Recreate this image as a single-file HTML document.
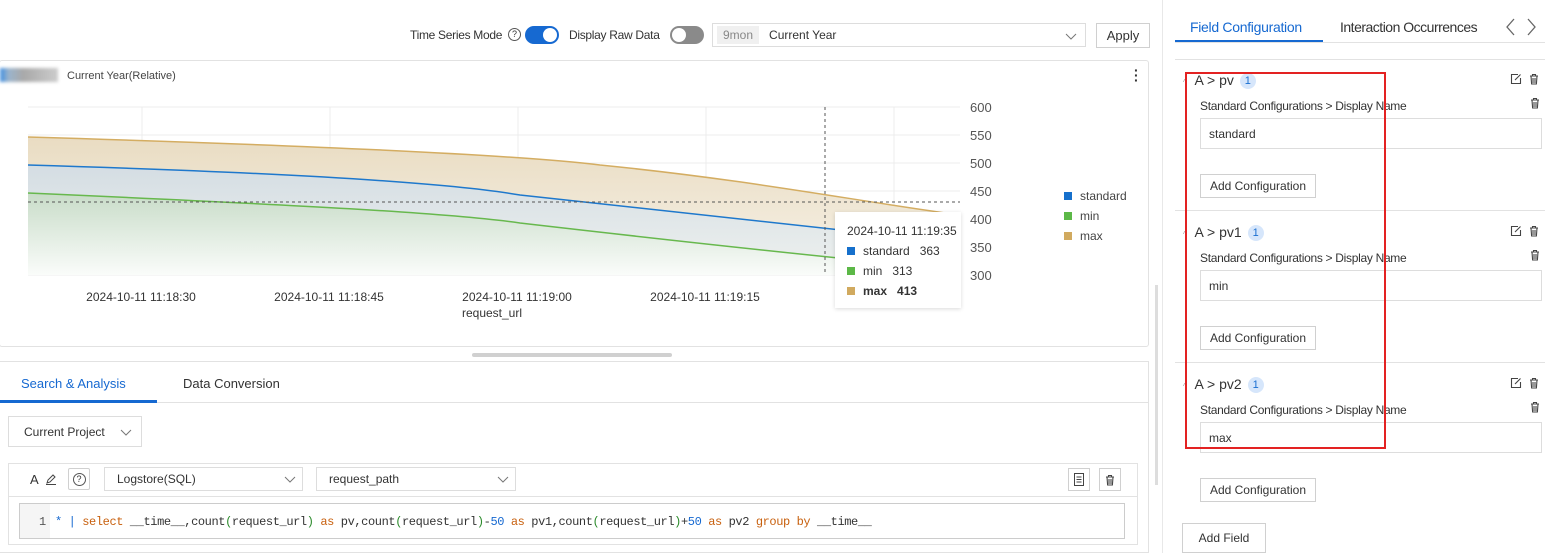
<!DOCTYPE html>
<html><head><meta charset="utf-8"><style>
*{box-sizing:border-box;margin:0;padding:0}
body{width:1545px;height:553px;overflow:hidden;background:#fff;font-family:"Liberation Sans",sans-serif;font-size:12px;color:#333;position:relative}
.a{position:absolute}
.sw{width:34px;height:18px;border-radius:9px}
.btn{border:1px solid #d0d0d0;background:#fff;font-size:12px;color:#333;display:flex;align-items:center;justify-content:center}
.inp{border:1px solid #ddd;background:#fff;display:flex;align-items:center;padding-left:8px;font-size:12px;color:#333}
.badge{display:inline-block;width:16px;height:16px;border-radius:8px;background:#d6e6fb;color:#1a6fd1;text-align:center;font-size:11px;line-height:16px;margin-left:6px;vertical-align:1px}
.nw{white-space:nowrap}
</style></head><body>
<svg width="0" height="0" style="position:absolute"><defs>
<g id="tr"><path d="M2 3h8M4.5 3V1.5h3V3M3 3l.6 8h4.8L9 3M5 5v5M7 5v5" fill="none" stroke="#444" stroke-width="1.1"/></g>
<g id="ed"><path d="M8 1.5H1.5v9h9V5" fill="none" stroke="#444" stroke-width="1.1"/><path d="M5 7l5.5-5.5" stroke="#444" stroke-width="1.1"/></g>
<g id="cv"><path d="M1 1l5 5 5-5" fill="none" stroke="#777" stroke-width="1"/></g>
</defs></svg>
<!-- top bar -->
<div class="a nw" style="left:410px;top:28px;font-size:12px;letter-spacing:-0.3px">Time Series Mode</div>
<div class="a" style="left:508px;top:28px;width:13px;height:13px;border:1px solid #555;border-radius:50%;font-size:9px;text-align:center;line-height:11px">?</div>
<div class="a sw" style="left:525px;top:26px;background:#1669d1"><div style="position:absolute;right:2px;top:2px;width:14px;height:14px;border-radius:7px;background:#fff"></div></div>
<div class="a nw" style="left:569px;top:28px;letter-spacing:-0.3px">Display Raw Data</div>
<div class="a sw" style="left:670px;top:26px;background:#8a8a8a"><div style="position:absolute;left:2px;top:2px;width:14px;height:14px;border-radius:7px;background:#fff"></div></div>
<div class="a inp" style="left:712px;top:23px;width:374px;height:24px;padding-left:4px"><span style="background:#f0f0f0;color:#888;padding:2px 6px">9mon</span><span style="margin-left:10px">Current Year</span><svg style="position:absolute;right:8px;top:9px" width="12" height="7"><use href="#cv"/></svg></div>
<div class="a btn" style="left:1096px;top:23px;width:54px;height:25px;font-size:13px">Apply</div>
<!-- chart panel -->
<div class="a" style="left:-1px;top:60px;width:1150px;height:287px;border:1px solid #e2e2e2;border-radius:3px"></div>
<div class="a" style="left:0;top:68px;width:58px;height:14px;background:linear-gradient(90deg,#3f8ee0 0,#9bb4cc 15%,#a9a9a9 40%,#ccc 100%);filter:blur(1.5px)"></div>
<div class="a nw" style="left:67px;top:70px;font-size:11px;color:#444">Current Year(Relative)</div>
<div class="a" style="left:1134px;top:68px;font-size:14px;font-weight:bold;line-height:5px;color:#333">·<br>·<br>·</div>
<svg class="a" style="left:0;top:95px" width="1150" height="230">
<defs>
<linearGradient id="g1" x1="0" y1="0" x2="0" y2="1"><stop offset="0" stop-color="#e9dcc2"/><stop offset="1" stop-color="#f7f2e8"/></linearGradient>
<linearGradient id="g2" x1="0" y1="0" x2="0" y2="1"><stop offset="0" stop-color="#d4dde3"/><stop offset="1" stop-color="#eef1ef"/></linearGradient>
<linearGradient id="g3" x1="0" y1="0" x2="0" y2="1"><stop offset="0" stop-color="#c8dcc8"/><stop offset="1" stop-color="#fafcfa"/></linearGradient>
</defs>
<g stroke="#ececec" stroke-width="1">
<line x1="28" y1="12" x2="960" y2="12"/><line x1="28" y1="40" x2="960" y2="40"/><line x1="28" y1="68" x2="960" y2="68"/><line x1="28" y1="96" x2="960" y2="96"/><line x1="28" y1="124" x2="960" y2="124"/><line x1="28" y1="152" x2="960" y2="152"/><line x1="28" y1="180" x2="960" y2="180"/>
<line x1="142" y1="12" x2="142" y2="180"/><line x1="330" y1="12" x2="330" y2="180"/><line x1="518" y1="12" x2="518" y2="180"/><line x1="706" y1="12" x2="706" y2="180"/><line x1="894" y1="12" x2="894" y2="180"/>
</g>
<path d="M28 42 C300 50 520 60 600 70 C750 85 850 105 960 120 L960 180 L28 180Z" fill="url(#g1)"/>
<path d="M28 70 C300 78 450 88 520 100 C650 115 800 130 960 148 L960 180 L28 180Z" fill="url(#g2)"/>
<path d="M28 98 C300 110 450 118 520 128 C650 143 800 160 960 175 L960 180 L28 180Z" fill="url(#g3)"/>
<path d="M28 42 C300 50 520 60 600 70 C750 85 850 105 960 120" fill="none" stroke="#d4ad62" stroke-width="1.5"/>
<path d="M28 70 C300 78 450 88 520 100 C650 115 800 130 960 148" fill="none" stroke="#1e78cc" stroke-width="1.5"/>
<path d="M28 98 C300 110 450 118 520 128 C650 143 800 160 960 175" fill="none" stroke="#67b84d" stroke-width="1.5"/>
<line x1="825" y1="12" x2="825" y2="180" stroke="#555" stroke-dasharray="3,3"/>
<line x1="28" y1="107" x2="960" y2="107" stroke="#555" stroke-dasharray="3,3"/>
<g font-size="13" fill="#555"><text x="970" y="17">600</text><text x="970" y="45">550</text><text x="970" y="73">500</text><text x="970" y="101">450</text><text x="970" y="129">400</text><text x="970" y="157">350</text><text x="970" y="185">300</text></g>
<g font-size="12" fill="#333" text-anchor="middle"><text x="141" y="206">2024-10-11 11:18:30</text><text x="329" y="206">2024-10-11 11:18:45</text><text x="517" y="206">2024-10-11 11:19:00</text><text x="705" y="206">2024-10-11 11:19:15</text><text x="492" y="222">request_url</text></g>
</svg>
<div class="a nw" style="left:835px;top:212px;width:126px;height:96px;background:#fff;box-shadow:0 1px 4px rgba(0,0,0,.15);font-size:12px;padding:9px 12px;line-height:20px">
<div>2024-10-11 11:19:35</div>
<div><span style="display:inline-block;width:8px;height:8px;background:#1670cc;margin-right:8px"></span>standard&nbsp;&nbsp;&nbsp;363</div>
<div><span style="display:inline-block;width:8px;height:8px;background:#5cb847;margin-right:8px"></span>min&nbsp;&nbsp;&nbsp;313</div>
<div><span style="display:inline-block;width:8px;height:8px;background:#d1aa5f;margin-right:8px"></span><b>max&nbsp;&nbsp;&nbsp;413</b></div>
</div>
<div class="a nw" style="left:1064px;top:186px;line-height:20px;font-size:12px;color:#444">
<div><span style="display:inline-block;width:8px;height:8px;background:#1670cc;margin-right:8px"></span>standard</div>
<div><span style="display:inline-block;width:8px;height:8px;background:#5cb847;margin-right:8px"></span>min</div>
<div><span style="display:inline-block;width:8px;height:8px;background:#d1aa5f;margin-right:8px"></span>max</div>
</div>
<div class="a" style="left:472px;top:353px;width:200px;height:4px;background:#d0d0d0;border-radius:2px"></div>
<div class="a" style="left:1155px;top:285px;width:3px;height:200px;background:#ddd"></div>
<!-- bottom panel -->
<div class="a" style="left:-1px;top:361px;width:1150px;height:192px;border:1px solid #e2e2e2"></div>
<div class="a" style="left:0;top:402px;width:1148px;height:1px;background:#e2e2e2"></div>
<div class="a nw" style="left:21px;top:376px;font-size:13px;color:#1669d1">Search &amp; Analysis</div>
<div class="a" style="left:0;top:400px;width:157px;height:3px;background:#1669d1"></div>
<div class="a nw" style="left:183px;top:376px;font-size:13px;color:#333">Data Conversion</div>
<div class="a inp" style="left:8px;top:416px;width:134px;height:31px;padding-left:15px">Current Project<svg style="position:absolute;right:9px;top:12px" width="12" height="7"><use href="#cv"/></svg></div>
<div class="a" style="left:8px;top:463px;width:1130px;height:82px;border:1px solid #e2e2e2"></div>
<div class="a" style="left:8px;top:496px;width:1130px;height:1px;background:#e2e2e2"></div>
<div class="a" style="left:30px;top:472px;font-size:13px">A</div>
<svg class="a" style="left:45px;top:473px" width="12" height="12"><path d="M2 10l1-3 5-5 2 2-5 5zM1 11.5h10" fill="none" stroke="#444" stroke-width="1"/></svg>
<div class="a btn" style="left:68px;top:468px;width:22px;height:22px;border-radius:2px"><span style="width:13px;height:13px;border:1px solid #555;border-radius:50%;font-size:9px;text-align:center;line-height:11px">?</span></div>
<div class="a inp" style="left:104px;top:467px;width:199px;height:24px;padding-left:12px">Logstore(SQL)<svg style="position:absolute;right:6px;top:8px" width="12" height="7"><use href="#cv"/></svg></div>
<div class="a inp" style="left:316px;top:467px;width:200px;height:24px;padding-left:12px">request_path<svg style="position:absolute;right:6px;top:8px" width="12" height="7"><use href="#cv"/></svg></div>
<div class="a btn" style="left:1068px;top:468px;width:22px;height:23px"><svg width="10" height="13"><rect x="0.5" y="0.5" width="9" height="12" fill="none" stroke="#444"/><path d="M2.5 4h5M2.5 6.5h5M2.5 9h5" stroke="#444"/></svg></div>
<div class="a btn" style="left:1099px;top:468px;width:22px;height:23px"><svg width="12" height="12"><use href="#tr"/></svg></div>
<div class="a" style="left:19px;top:503px;width:1106px;height:36px;border:1px solid #ccc;background:#fff"></div>
<div class="a" style="left:20px;top:504px;width:30px;height:34px;background:#f5f5f5"></div>
<div class="a" style="left:39px;top:515px;font-family:'Liberation Mono',monospace;font-size:12px;color:#555">1</div>
<div class="a" style="left:55px;top:515px;font-family:'Liberation Mono',monospace;font-size:12px;color:#333;white-space:pre;letter-spacing:-0.4px"><span style="color:#1669d1">*</span> <span style="color:#1669d1">|</span> <span style="color:#c8600e">select</span> __time__,count<span style="color:#2a8a2a">(</span>request_url<span style="color:#2a8a2a">)</span> <span style="color:#c8600e">as</span> pv,count<span style="color:#2a8a2a">(</span>request_url<span style="color:#2a8a2a">)</span>-<span style="color:#1669d1">50</span> <span style="color:#c8600e">as</span> pv1,count<span style="color:#2a8a2a">(</span>request_url<span style="color:#2a8a2a">)</span>+<span style="color:#1669d1">50</span> <span style="color:#c8600e">as</span> pv2 <span style="color:#c8600e">group by</span> __time__</div>
<!-- right panel -->
<div class="a" style="left:1162px;top:0;width:1px;height:553px;background:#e8e8e8"></div>
<div class="a nw" style="left:1190px;top:19px;font-size:14px;color:#1669d1;letter-spacing:-0.3px">Field Configuration</div>
<div class="a" style="left:1175px;top:40px;width:148px;height:3px;background:#1669d1"></div>
<div class="a" style="left:1175px;top:42px;width:370px;height:1px;background:#e2e2e2"></div>
<div class="a nw" style="left:1340px;top:19px;font-size:14px;color:#333;letter-spacing:-0.5px">Interaction Occurrences</div>
<svg class="a" style="left:1504px;top:17px" width="34" height="20"><path d="M10 2l-7 8 7 8M24 2l7 8-7 8" fill="none" stroke="#666" stroke-width="1.3"/></svg>
<div class="a" style="left:1175px;top:59px;width:370px;height:1px;background:#e2e2e2"></div>
<div class="a" style="left:1175px;top:210px;width:370px;height:1px;background:#e2e2e2"></div>
<div class="a" style="left:1175px;top:362px;width:370px;height:1px;background:#e2e2e2"></div>

<div class="a nw" style="left:1183px;top:72px;font-size:14px"><span style="font-size:8px;color:#999">^</span>&nbsp;&nbsp;A &gt; pv<span class="badge">1</span></div>
<div class="a nw" style="left:1183px;top:224px;font-size:14px"><span style="font-size:8px;color:#999">^</span>&nbsp;&nbsp;A &gt; pv1<span class="badge">1</span></div>
<div class="a nw" style="left:1183px;top:376px;font-size:14px"><span style="font-size:8px;color:#999">^</span>&nbsp;&nbsp;A &gt; pv2<span class="badge">1</span></div>
<svg class="a" style="left:1510px;top:73px" width="12" height="12"><use href="#ed"/></svg><svg class="a" style="left:1528px;top:73px" width="12" height="12"><use href="#tr"/></svg>
<svg class="a" style="left:1510px;top:225px" width="12" height="12"><use href="#ed"/></svg><svg class="a" style="left:1528px;top:225px" width="12" height="12"><use href="#tr"/></svg>
<svg class="a" style="left:1510px;top:377px" width="12" height="12"><use href="#ed"/></svg><svg class="a" style="left:1528px;top:377px" width="12" height="12"><use href="#tr"/></svg>

<div class="a nw" style="left:1200px;top:99px;letter-spacing:-0.3px">Standard Configurations &gt; Display Name</div>
<div class="a nw" style="left:1200px;top:251px;letter-spacing:-0.3px">Standard Configurations &gt; Display Name</div>
<div class="a nw" style="left:1200px;top:403px;letter-spacing:-0.3px">Standard Configurations &gt; Display Name</div>
<svg class="a" style="left:1529px;top:97px" width="12" height="12"><use href="#tr"/></svg>
<svg class="a" style="left:1529px;top:249px" width="12" height="12"><use href="#tr"/></svg>
<svg class="a" style="left:1529px;top:401px" width="12" height="12"><use href="#tr"/></svg>
<div class="a inp" style="left:1200px;top:118px;width:342px;height:31px">standard</div>
<div class="a inp" style="left:1200px;top:270px;width:342px;height:31px">min</div>
<div class="a inp" style="left:1200px;top:422px;width:342px;height:31px">max</div>
<div class="a btn" style="left:1200px;top:174px;width:116px;height:24px">Add Configuration</div>
<div class="a btn" style="left:1200px;top:326px;width:116px;height:24px">Add Configuration</div>
<div class="a btn" style="left:1200px;top:478px;width:116px;height:24px">Add Configuration</div>
<div class="a btn" style="left:1182px;top:523px;width:84px;height:30px">Add Field</div>
<div class="a" style="left:1185px;top:72px;width:201px;height:377px;border:2px solid #e32222"></div>
</body></html>
